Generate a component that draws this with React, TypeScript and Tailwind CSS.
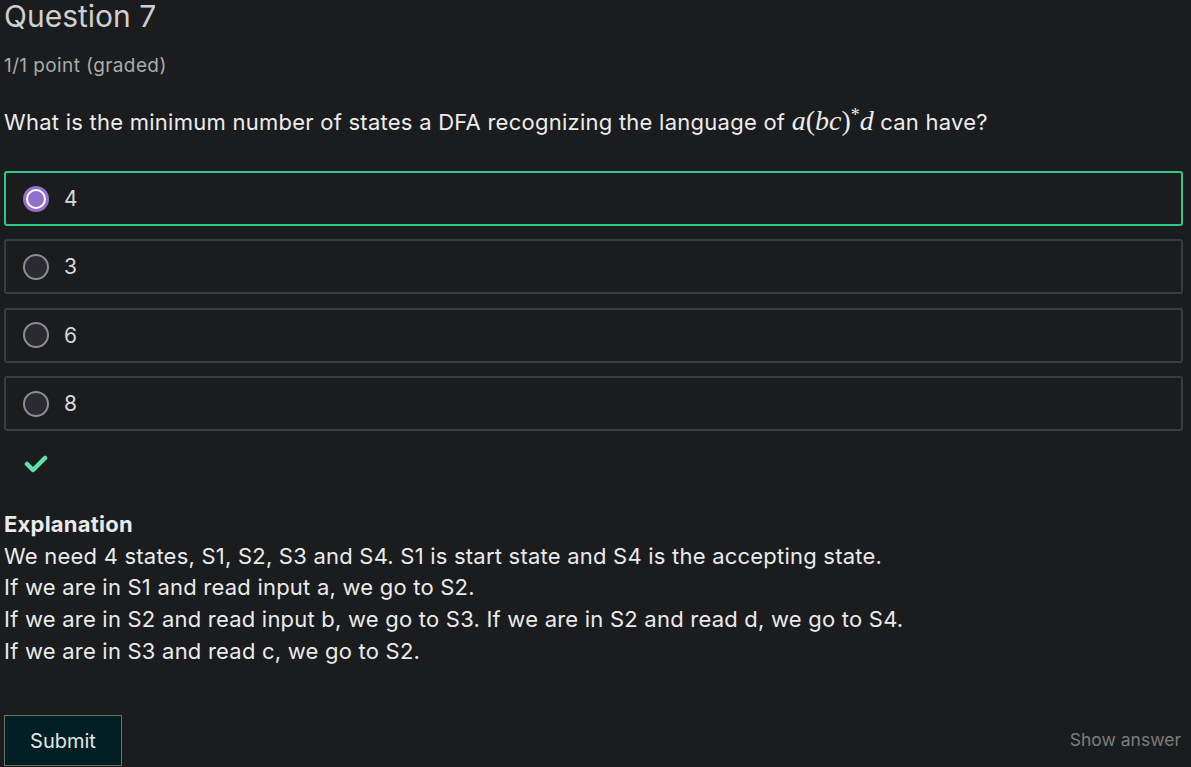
const options = ["4", "3", "6", "8"]

const explanation = [
  "We need 4 states, S1, S2, S3 and S4. S1 is start state and S4 is the accepting state.",
  "If we are in S1 and read input a, we go to S2.",
  "If we are in S2 and read input b, we go to S3. If we are in S2 and read d, we go to S4.",
  "If we are in S3 and read c, we go to S2.",
]

const Radio = ({ checked }: { checked: boolean }) =>
  checked ? (
    <span className="flex h-[26px] w-[26px] items-center justify-center rounded-full bg-[#9370cc]">
      <span className="h-[20px] w-[20px] rounded-full border-2 border-white bg-[#9370cc]" />
    </span>
  ) : (
    <span className="h-[26px] w-[26px] rounded-full border-2 border-[#8c8c92] bg-[#2b2a32]" />
  )

export default function App() {
  return (
    <div
      className="min-h-[767px] w-[1191px] overflow-hidden bg-[#1b1c1e] px-[4px] text-[#e6e6e6]"
      style={{ fontFamily: "Inter, 'Noto Sans', sans-serif" }}
    >
      <h1 className="text-[30px] leading-[32px] text-[#cfcfcf]">Question 7</h1>
      <p className="mt-[22px] text-[19px] leading-[24px] tracking-[0.4px] text-[#ababab]">1/1 point (graded)</p>
      <p className="mt-[29px] text-[22px] leading-[28px] tracking-[0.25px] text-[#ececec]">
        What is the minimum number of states a DFA recognizing the language of{" "}
        <span className="text-[28px] leading-none tracking-normal" style={{ fontFamily: "'Liberation Serif', serif" }}>
          <i>a</i>(<i>bc</i>)<sup className="text-[18px] leading-none">*</sup>
          <i>d</i>
        </span>{" "}
        can have?
      </p>

      <div className="mt-[35px] flex w-[1179px] flex-col gap-[13.4px]">
        {options.map((o, i) => (
          <div
            key={o}
            className={`flex h-[55px] items-center gap-[15px] rounded-[3px] border-2 pl-[17px] ${
              i === 0 ? "border-[#2ec986]" : "border-[#3a3b3d]"
            }`}
          >
            <Radio checked={i === 0} />
            <span className="text-[21px] text-[#d8d8d8]">{o}</span>
          </div>
        ))}
      </div>

      <div className="mt-[23px] pl-[20px]">
        <svg width="24" height="20" viewBox="0 0 24 20" fill="none">
          <path d="M3 10 L9 16 L21 4" stroke="#5ce2a6" strokeWidth="4.5" strokeLinecap="round" strokeLinejoin="round" />
        </svg>
      </div>

      <div className="mt-[35px] text-[22px] leading-[31.6px] tracking-[0.22px] text-[#eaeaea]">
        <p className="font-bold">Explanation</p>
        {explanation.map((l) => (
          <p key={l}>{l}</p>
        ))}
      </div>

      <div className="mt-[48px] flex items-end justify-between pr-[6px]">
        <button className="h-[51px] w-[118px] border border-[#6e6e68] bg-[#021f24] text-[20px] text-[#e6e6e6]">
          Submit
        </button>
        <span className="mb-[13px] text-[17.5px] text-[#7c7c7c]">Show answer</span>
      </div>
    </div>
  )
}
